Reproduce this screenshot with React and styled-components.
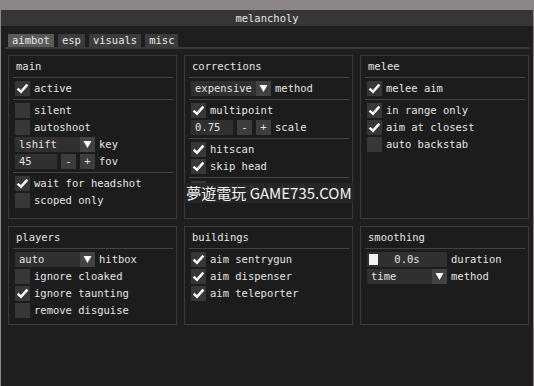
import React from 'react';
import styled, { createGlobalStyle } from 'styled-components';

const GlobalStyle = createGlobalStyle`
  html, body {
    margin: 0;
    padding: 0;
    background: #8b8788;
    overflow: hidden;
  }
  body {
    font-family: "DejaVu Sans Mono", "Liberation Mono", monospace;
    font-size: 10.5px;
    color: #e4e4e4;
  }
`;

const Check = () => (
  <svg width="15" height="15" viewBox="0 0 15 15">
    <path d="M2.6 7.6 L6 10.8 L12.4 3.6" stroke="#fff" strokeWidth="2.5" fill="none" />
  </svg>
);

const Arrow = () => (
  <svg width="15" height="15" viewBox="0 0 15 15">
    <path d="M3.5 4 L11.5 4 L7.5 11 Z" fill="#fff" />
  </svg>
);

const Checkbox = ({ checked, label }) => (
  <Row>
    <Box>{checked && <Check />}</Box>
    <Label>{label}</Label>
  </Row>
);

const Combo = ({ value, label }) => (
  <Row>
    <ComboBox>
      <ComboValue>{value}</ComboValue>
      <ArrowBox>
        <Arrow />
      </ArrowBox>
    </ComboBox>
    <Label>{label}</Label>
  </Row>
);

const Stepper = ({ value, label, inputWidth }) => (
  <Row>
    <Input $w={inputWidth}>{value}</Input>
    <StepButton>-</StepButton>
    <StepButton>+</StepButton>
    <Label>{label}</Label>
  </Row>
);

const Slider = ({ value, label }) => (
  <Row>
    <SliderTrack>
      <Grab />
      {value}
    </SliderTrack>
    <Label>{label}</Label>
  </Row>
);

const tabs = ['aimbot', 'esp', 'visuals', 'misc'];

export default function App() {
  return (
    <>
      <GlobalStyle />
      <Window>
        <TitleBar>melancholy</TitleBar>
        <Body>
          <TabBar>
            {tabs.map((t, i) => (
              <Tab key={t} $active={i === 0}>
                {t}
              </Tab>
            ))}
          </TabBar>
          <Grid>
            <Panel>
              <PanelTitle>main</PanelTitle>
              <Separator />
              <Checkbox checked label="active" />
              <Separator />
              <Checkbox label="silent" />
              <Checkbox label="autoshoot" />
              <Combo value="lshift" label="key" />
              <Stepper value="45" label="fov" inputWidth={42} />
              <Separator />
              <Checkbox checked label="wait for headshot" />
              <Checkbox label="scoped only" />
            </Panel>

            <Panel>
              <PanelTitle>corrections</PanelTitle>
              <Separator />
              <Combo value="expensive" label="method" />
              <Separator />
              <Checkbox checked label="multipoint" />
              <Stepper value="0.75" label="scale" inputWidth={42} />
              <Separator />
              <Checkbox checked label="hitscan" />
              <Checkbox checked label="skip head" />
              <Separator />
              <Checkbox label="projectile pred" />
              <Watermark>夢遊電玩 GAME735.COM</Watermark>
            </Panel>

            <Panel>
              <PanelTitle>melee</PanelTitle>
              <Separator />
              <Checkbox checked label="melee aim" />
              <Separator />
              <Checkbox checked label="in range only" />
              <Checkbox checked label="aim at closest" />
              <Checkbox label="auto backstab" />
            </Panel>

            <Panel>
              <PanelTitle>players</PanelTitle>
              <Separator />
              <Combo value="auto" label="hitbox" />
              <Checkbox label="ignore cloaked" />
              <Checkbox checked label="ignore taunting" />
              <Checkbox label="remove disguise" />
            </Panel>

            <Panel>
              <PanelTitle>buildings</PanelTitle>
              <Separator />
              <Checkbox checked label="aim sentrygun" />
              <Checkbox checked label="aim dispenser" />
              <Checkbox checked label="aim teleporter" />
            </Panel>

            <Panel>
              <PanelTitle>smoothing</PanelTitle>
              <Separator />
              <Slider value="0.0s" label="duration" />
              <Combo value="time" label="method" />
            </Panel>
          </Grid>
        </Body>
      </Window>
    </>
  );
}

const Window = styled.div`
  margin: 10px 0 0 1px;
  width: 532px;
  height: 376px;
  background: #1e1e1e;
  display: flex;
  flex-direction: column;
`;

const TitleBar = styled.div`
  height: 16px;
  line-height: 17px;
  background: #363636;
  text-align: center;
  color: #e8e8e8;
`;

const Body = styled.div`
  padding: 8px 3px 0 4px;
`;

const TabBar = styled.div`
  display: flex;
  gap: 4px;
  padding-left: 3px;
  border-bottom: 2px solid #3a3a3a;
`;

const Tab = styled.div`
  height: 13px;
  line-height: 13px;
  padding: 0 4px;
  background: ${(p) => (p.$active ? '#5a5a5a' : '#3b3b3b')};
  color: #e8e8e8;
`;

const Grid = styled.div`
  display: grid;
  grid-template-columns: repeat(3, 169px);
  grid-template-rows: 164px 99px;
  gap: 7px;
  margin-top: 6px;
  padding-left: 3px;
`;

const Panel = styled.div`
  position: relative;
  border: 1px solid #3a3a3a;
  background: #1c1c1c;
  padding: 3px 6px;
  display: flex;
  flex-direction: column;
  gap: 2px;
`;

const PanelTitle = styled.div`
  height: 15px;
  line-height: 15px;
  padding-left: 1px;
`;

const Separator = styled.div`
  height: 1px;
  background: #444;
  margin: 1px -3px 1px -2px;
`;

const Row = styled.div`
  height: 15px;
  display: flex;
  align-items: center;
  gap: 4px;
  white-space: nowrap;
`;

const Label = styled.span`
  line-height: 15px;
`;

const Box = styled.div`
  width: 15px;
  height: 15px;
  background: #373737;
  display: flex;
`;

const ComboBox = styled.div`
  width: 80px;
  height: 15px;
  background: #303030;
  display: flex;
`;

const ComboValue = styled.span`
  flex: 1;
  padding-left: 4px;
  line-height: 15px;
`;

const ArrowBox = styled.div`
  width: 15px;
  height: 15px;
  background: #424242;
  display: flex;
`;

const Input = styled.div`
  width: ${(p) => p.$w}px;
  height: 15px;
  line-height: 15px;
  padding-left: 4px;
  box-sizing: border-box;
  background: #303030;
`;

const StepButton = styled.div`
  width: 15px;
  height: 15px;
  line-height: 15px;
  text-align: center;
  background: #3d3d3d;
`;

const SliderTrack = styled.div`
  position: relative;
  width: 80px;
  height: 15px;
  line-height: 15px;
  text-align: center;
  background: #303030;
`;

const Grab = styled.div`
  position: absolute;
  left: 2px;
  top: 2px;
  width: 9px;
  height: 11px;
  background: #f2f2f2;
`;

const Watermark = styled.div`
  position: absolute;
  left: -1px;
  top: 127px;
  width: 170px;
  height: 20px;
  background: rgba(38, 38, 38, 0.92);
  color: #f4f4f4;
  font-family: "Noto Sans CJK SC", "Noto Sans", sans-serif;
  font-size: 15px;
  line-height: 20px;
  text-align: center;
  white-space: nowrap;
`;
